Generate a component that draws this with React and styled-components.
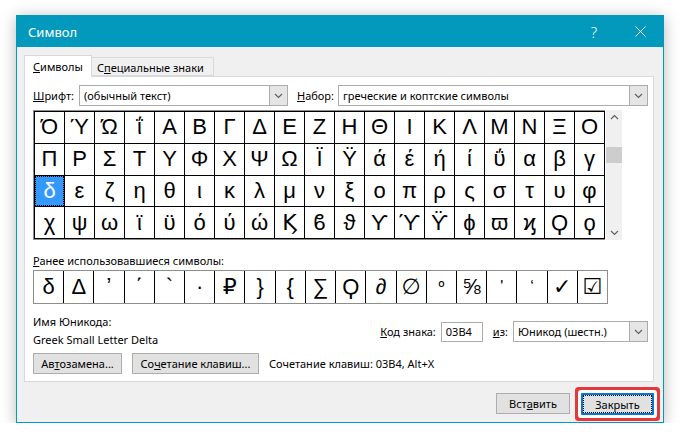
import styled, { createGlobalStyle } from 'styled-components'

const Global = createGlobalStyle`
* { box-sizing: border-box; }
body {
  margin: 0;
  background: #ffffff;
  font-family: "Noto Sans", "Open Sans", sans-serif;
  font-size: 11px;
  color: #000;
}
`

const Page = styled.div`
padding: 15px 0 0 16px;
`

const Dialog = styled.div`
width: 648px;
height: 408px;
background: #f0f0f0;
border: 1px solid #0399bd;
box-shadow: 0 2px 14px rgba(0, 0, 0, 0.28);
display: flex;
flex-direction: column;
`

const TitleBar = styled.div`
height: 31px;
flex: none;
background: #0399bd;
color: #fff;
display: flex;
align-items: center;
padding-left: 11px;
font-size: 13px;
`

const Title = styled.div`
flex: 1;
`

const TitleButton = styled.div`
width: 46px;
height: 31px;
display: flex;
align-items: center;
justify-content: center;
font-size: 15px;
font-weight: 300;
`

const Body = styled.div`
flex: 1;
padding: 8px 9px 0 7px;
display: flex;
flex-direction: column;
`

const TabRow = styled.div`
display: flex;
align-items: flex-end;
height: 21px;
position: relative;
z-index: 1;
`

const Tab = styled.div`
height: ${p => (p.$active ? '22px' : '19px')};
background: ${p => (p.$active ? '#ffffff' : '#f0f0f0')};
border: 1px solid #d9d9d9;
border-bottom: ${p => (p.$active ? 'none' : '1px solid #d9d9d9')};
border-left: ${p => (p.$first ? '1px solid #d9d9d9' : 'none')};
width: ${p => p.$w}px;
padding: ${p => (p.$active ? '3px 0 0 8px' : '2px 0 0 5px')};
margin-bottom: ${p => (p.$active ? '-1px' : '0')};
white-space: nowrap;
`

const Panel = styled.div`
height: 306px;
background: #fff;
border: 1px solid #d9d9d9;
padding: 8px 5px 0 8px;
display: flex;
flex-direction: column;
`

const FontRow = styled.div`
display: flex;
align-items: center;
height: 21px;
`

const Label = styled.span`
white-space: nowrap;
margin-right: ${p => p.$gap || 0}px;
margin-left: ${p => p.$left || 0}px;
`

const Combo = styled.div`
width: ${p => p.$w}px;
height: 21px;
background: #fff;
border: 1px solid #acacac;
display: flex;
align-items: center;
`

const ComboText = styled.div`
flex: 1;
padding-left: 4px;
white-space: nowrap;
overflow: hidden;
`

const ComboButton = styled.div`
width: 18px;
height: 19px;
background: #e5e5e5;
border-left: 1px solid #acacac;
display: flex;
align-items: center;
justify-content: center;
`

const GridBox = styled.div`
margin-top: 4px;
display: flex;
height: 130px;
`

const CharGrid = styled.div`
display: grid;
grid-template-columns: repeat(19, 29px);
grid-template-rows: repeat(4, 1fr);
gap: 1px;
padding: 1px;
background: #000;
border: 1px solid #8e8e8e;
border-right: none;
`

const Cell = styled.div`
background: ${p => (p.$selected ? '#3399ff' : '#fff')};
color: ${p => (p.$selected ? '#fff' : '#000')};
outline: ${p => (p.$selected ? '1px dotted #000' : 'none')};
outline-offset: -1px;
display: flex;
align-items: center;
justify-content: center;
font-family: "Liberation Sans", "DejaVu Sans", sans-serif;
font-size: 22px;
line-height: 1;
`

const ScrollBar = styled.div`
width: 16px;
margin-left: 1px;
background: #f0f0f0;
display: flex;
flex-direction: column;
align-items: center;
justify-content: space-between;
padding: 4px 0;
position: relative;
`

const Thumb = styled.div`
position: absolute;
left: 0;
top: 37px;
width: 16px;
height: 16px;
background: #cdcdcd;
`

const SectionLabel = styled.div`
margin-top: 12px;
line-height: 17px;
`

const RecentRow = styled.div`
margin-top: 1px;
width: 575px;
height: 34px;
display: grid;
grid-template-columns: repeat(19, 1fr);
gap: 1px;
background: #000;
border: 1px solid #8e8e8e;
`

const RecentCell = styled(Cell)`
font-size: ${p => p.$size || 22}px;
`

const InfoRow = styled.div`
margin-top: 9px;
display: flex;
justify-content: space-between;
align-items: flex-start;
`

const InfoText = styled.div`
line-height: 17px;
margin-bottom: 1px;
`

const CodeRow = styled.div`
margin-top: 8px;
display: flex;
align-items: center;
`

const Input = styled.div`
width: 42px;
height: 20px;
border: 1px solid #acacac;
background: #fff;
padding-left: 4px;
display: flex;
align-items: center;
`

const ButtonRow = styled.div`
margin-top: 4px;
display: flex;
align-items: center;
gap: 10px;
`

const Button = styled.div`
width: ${p => p.$w}px;
height: 21px;
background: #e1e1e1;
border: 1px solid #adadad;
display: flex;
align-items: center;
justify-content: center;
white-space: nowrap;
`

const Footer = styled.div`
margin-top: 11px;
display: flex;
justify-content: flex-end;
gap: 11px;
`

const DefaultButton = styled(Button)`
height: 22px;
border: 2px solid #0078d7;
border-radius: 1px;
box-shadow: 0 0 0 3px #fff, 0 0 0 6px #e3383c;
`

const Focus = styled.div`
border: 1px dotted #000;
width: 100%;
height: 100%;
display: flex;
align-items: center;
justify-content: center;
`

const Chevron = ({ up }) => (
  <svg width="9" height="6" viewBox="0 0 9 6">
    <path d={up ? 'M1 5 L4.5 1.5 L8 5' : 'M1 1 L4.5 4.5 L8 1'} fill="none" stroke="#606060" strokeWidth="1.2" />
  </svg>
)

const rows = [
  'Ό Ύ Ώ ΐ Α Β Γ Δ Ε Ζ Η Θ Ι Κ Λ Μ Ν Ξ Ο',
  'Π Ρ Σ Τ Υ Φ Χ Ψ Ω Ϊ Ϋ ά έ ή ί ΰ α β γ',
  'δ ε ζ η θ ι κ λ μ ν ξ ο π ρ ς σ τ υ φ',
  'χ ψ ω ϊ ϋ ό ύ ώ Ϗ ϐ ϑ ϒ ϓ ϔ ϕ ϖ ϗ Ϙ ϙ'
].map(r => r.split(' '))

const recent = [
  ['δ'], ['Δ'], ['ʼ'], ['΄'], ['`'], ['·'], ['₽'], ['}'], ['{'], ['∑'],
  ['Ϙ'], ['∂'], ['∅'], ['º', 16], ['⅝'], ["'", 16], ['‘', 16], ['✓'], ['☑']
]

const App = () => {
  return (
    <Page>
      <Global />
      <Dialog>
        <TitleBar>
          <Title>Символ</Title>
          <TitleButton>?</TitleButton>
          <TitleButton>
            <svg width="11" height="11" viewBox="0 0 11 11">
              <path d="M0.5 0.5 L10.5 10.5 M10.5 0.5 L0.5 10.5" stroke="#fff" strokeWidth="1" />
            </svg>
          </TitleButton>
        </TitleBar>
        <Body>
          <TabRow>
            <Tab $active $first $w={68}><u>С</u>имволы</Tab>
            <Tab $w={122}>С<u>п</u>ециальные знаки</Tab>
          </TabRow>
          <Panel>
            <FontRow>
              <Label $gap={5}><u>Ш</u>рифт:</Label>
              <Combo $w={209}>
                <ComboText>(обычный текст)</ComboText>
                <ComboButton><Chevron /></ComboButton>
              </Combo>
              <Label $left={9} $gap={4}><u>Н</u>абор:</Label>
              <Combo $w={310}>
                <ComboText>греческие и коптские символы</ComboText>
                <ComboButton><Chevron /></ComboButton>
              </Combo>
            </FontRow>
            <GridBox>
              <CharGrid>
                {rows.map((r, ri) =>
                  r.map((c, ci) => (
                    <Cell key={ri + '-' + ci} $selected={ri === 2 && ci === 0}>{c}</Cell>
                  ))
                )}
              </CharGrid>
              <ScrollBar>
                <Chevron up />
                <Thumb />
                <Chevron />
              </ScrollBar>
            </GridBox>
            <SectionLabel><u>Р</u>анее использовавшиеся символы:</SectionLabel>
            <RecentRow>
              {recent.map(([c, s], i) => (
                <RecentCell key={i} $size={s}>{c}</RecentCell>
              ))}
            </RecentRow>
            <InfoRow>
              <div>
                <InfoText>Имя Юникода:</InfoText>
                <InfoText>Greek Small Letter Delta</InfoText>
              </div>
              <CodeRow>
                <Label $gap={5}><u>К</u>од знака:</Label>
                <Input>03B4</Input>
                <Label $left={10} $gap={5}><u>и</u>з:</Label>
                <Combo $w={135}>
                  <ComboText>Юникод (шестн.)</ComboText>
                  <ComboButton><Chevron /></ComboButton>
                </Combo>
              </CodeRow>
            </InfoRow>
            <ButtonRow>
              <Button $w={89}>Ав<u>т</u>озамена...</Button>
              <Button $w={127}>Со<u>ч</u>етание клавиш...</Button>
              <span>Сочетание клавиш: 03B4, Alt+X</span>
            </ButtonRow>
          </Panel>
          <Footer>
            <Button $w={74}>Вст<u>а</u>вить</Button>
            <DefaultButton $w={73}>
              <Focus>Закрыть</Focus>
            </DefaultButton>
          </Footer>
        </Body>
      </Dialog>
    </Page>
  )
}

export default App
